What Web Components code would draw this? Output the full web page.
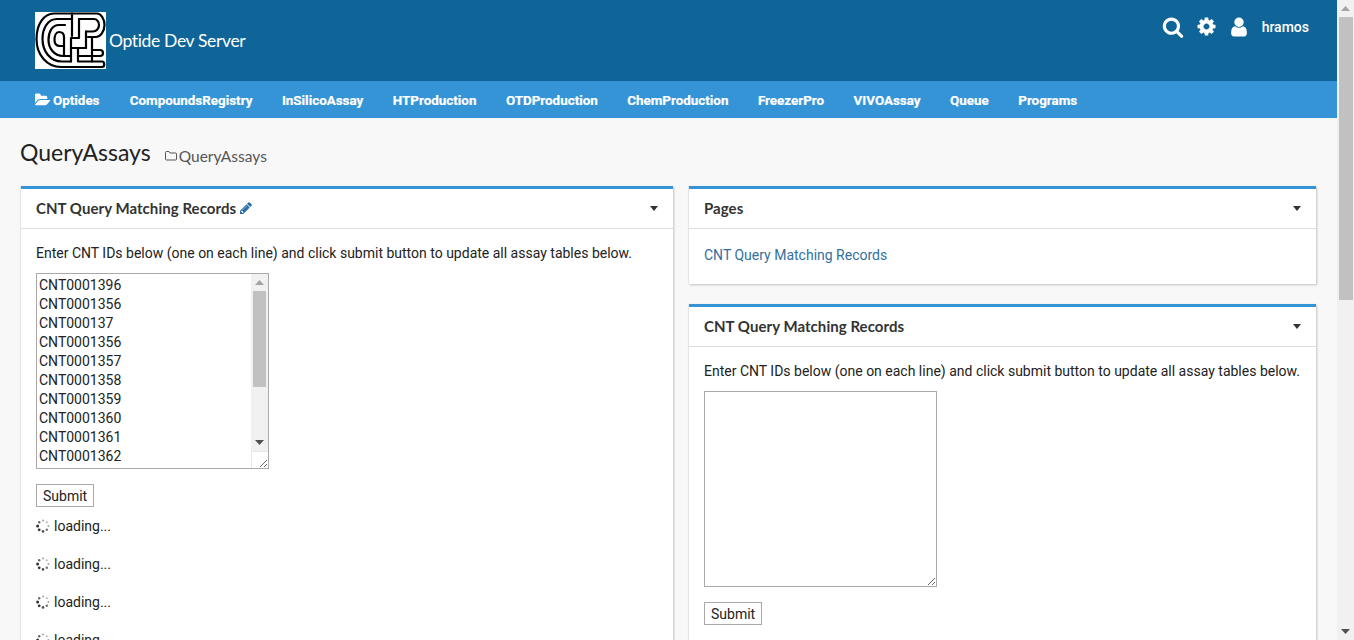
<!DOCTYPE html>
<html lang="en">
<head>
<meta charset="utf-8">
<title>QueryAssays</title>
<style>
  html, body { height: 640px; overflow: hidden; }
  body { margin: 0; display: flex; background: #f8f8f8; font-family: Roboto, "Liberation Sans", sans-serif; font-size: 14px; color: #222; }
  main { flex: 1; min-width: 0; height: 640px; overflow: hidden; }
</style>
</head>
<body>
<main>
  <optide-header></optide-header>
  <optide-nav>
    <nav-link icon="folder-open">Optides</nav-link>
    <nav-link>CompoundsRegistry</nav-link>
    <nav-link>InSilicoAssay</nav-link>
    <nav-link>HTProduction</nav-link>
    <nav-link>OTDProduction</nav-link>
    <nav-link>ChemProduction</nav-link>
    <nav-link>FreezerPro</nav-link>
    <nav-link>VIVOAssay</nav-link>
    <nav-link>Queue</nav-link>
    <nav-link>Programs</nav-link>
  </optide-nav>
  <page-title heading="QueryAssays" crumb="QueryAssays"></page-title>
  <page-columns>
    <div slot="left">
      <web-part title="CNT Query Matching Records" editable>
        <query-form scrolled ids="CNT0001396
CNT0001356
CNT000137
CNT0001356
CNT0001357
CNT0001358
CNT0001359
CNT0001360
CNT0001361
CNT0001362"></query-form>
        <loading-row></loading-row>
        <loading-row></loading-row>
        <loading-row></loading-row>
        <loading-row></loading-row>
      </web-part>
    </div>
    <div slot="right">
      <web-part title="Pages">
        <pages-list>CNT Query Matching Records</pages-list>
      </web-part>
      <web-part title="CNT Query Matching Records">
        <query-form></query-form>
      </web-part>
    </div>
  </page-columns>
</main>
<bar-scroll thumb="283" inset-right="1"></bar-scroll>

<script>
// Iconos (rutas de Font Awesome 4)
const ICONS = {
  search: ['0 0 1792 1792', 'M1216 832q0-185-131.5-316.5t-316.5-131.5-316.5 131.5-131.5 316.5 131.5 316.5 316.5 131.5 316.5-131.5 131.5-316.5zm512 832q0 52-38 90t-90 38q-54 0-90-38l-343-342q-179 124-399 124-143 0-273.5-55.5t-225-150-150-225-55.5-273.5 55.5-273.5 150-225 225-150 273.5-55.5 273.5 55.5 225 150 150 225 55.5 273.5q0 220-124 399l343 343q37 37 37 90z'],
  cog: ['0 0 1792 1792', 'M1152 896q0-106-75-181t-181-75-181 75-75 181 75 181 181 75 181-75 75-181zm512-109v222q0 12-8 23t-20 13l-185 28q-19 54-39 91 35 50 107 138 10 12 10 25t-9 23q-27 37-99 108t-94 71q-12 0-26-9l-138-108q-44 23-91 38-16 136-29 186-7 28-36 28h-222q-14 0-24.5-8.5t-11.5-21.5l-28-184q-49-16-90-37l-141 107q-10 9-25 9-14 0-25-11-126-114-165-168-7-10-7-23 0-12 8-23 15-21 51-66.5t54-70.5q-27-50-41-99l-183-27q-13-2-21-12.5t-8-23.5v-222q0-12 8-23t19-13l186-28q14-46 39-92-40-57-107-138-10-12-10-24 0-10 9-23 26-36 98.5-107.5t94.5-71.5q13 0 26 10l138 107q44-23 91-38 16-136 29-186 7-28 36-28h222q14 0 24.5 8.5t11.5 21.5l28 184q49 16 90 37l142-107q9-9 24-9 13 0 25 10 129 119 165 170 7 8 7 22 0 12-8 23-15 21-51 66.5t-54 70.5q26 50 41 98l183 28q13 2 21 12.5t8 23.5z'],
  user: ['0 0 1792 1792', 'M1536 1399q0 109-62.5 187t-150.5 78h-854q-88 0-150.5-78t-62.5-187q0-85 8.5-160.5t31.5-152 58.5-131 94-89 134.5-34.5q131 128 313 128t313-128q76 0 134.5 34.5t94 89 58.5 131 31.5 152 8.5 160.5zm-256-887q0 159-112.5 271.5t-271.5 112.5-271.5-112.5-112.5-271.5 112.5-271.5 271.5-112.5 271.5 112.5 112.5 271.5z'],
  'folder-open': ['0 0 1920 1792', 'M1815 952q0 31-31 66l-336 396q-43 51-120.5 86.5t-143.5 35.5h-1088q-34 0-60.5-13t-26.5-43q0-31 31-66l336-396q43-51 120.5-86.5t143.5-35.5h1088q34 0 60.5 13t26.5 43zm-343-344v160h-832q-94 0-197 47.5t-164 119.5l-337 396-5 6q0-4-.5-12.5t-.5-12.5v-960q0-92 66-158t158-66h320q92 0 158 66t66 158v32h544q92 0 158 66t66 158z'],
  pencil: ['0 0 1792 1792', 'M491 1536l91-91-235-235-91 91v107h128v128h107zm523-928q0-22-22-22-10 0-17 7l-542 542q-7 7-7 17 0 22 22 22 10 0 17-7l542-542q7-7 7-17zm-54-192l416 416-832 832h-416v-416zm683 96q0 53-37 90l-166 166-416-416 166-165q36-38 90-38 53 0 91 38l235 234q37 39 37 91z']
};

function iconSvg(name, size, color) {
  const [box, d] = ICONS[name];
  return `<svg viewBox="${box}" width="${size}" height="${size}" fill="${color}" aria-hidden="true"><path d="${d}"/></svg>`;
}

const HEADING_FONT = 'Lato, "Open Sans", sans-serif';

class BarScroll extends HTMLElement {
  connectedCallback() {
    if (this.shadowRoot) return;
    this.attachShadow({ mode: 'open' });
    const thumb = this.getAttribute('thumb');
    const right = this.getAttribute('inset-right') || 2;
    this.shadowRoot.innerHTML = `
      <style>
        :host { display: flex; flex-direction: column; flex: none; width: 17px; height: 100%; background: #f1f1f1; }
        .btn { flex: none; height: 17px; display: flex; align-items: center; justify-content: center; }
        .track { flex: 1; min-height: 0; }
        .thumb { height: ${thumb}px; margin: 0 ${right}px 0 2px; background: #c1c1c1; }
        svg { display: block; }
      </style>
      <div class="btn"><svg width="9" height="5"><path d="M0 5L4.5 0L9 5z" fill="#a3a3a3"/></svg></div>
      <div class="track"><div class="thumb"></div></div>
      <div class="btn"><svg width="9" height="5"><path d="M0 0L4.5 5L9 0z" fill="#505050"/></svg></div>
    `;
  }
}
customElements.define('bar-scroll', BarScroll);

// Cabecera con el logo y las acciones
class OptideHeader extends HTMLElement {
  constructor() {
    super();
    this.attachShadow({ mode: 'open' });
    this.shadowRoot.innerHTML = `
      <style>
        :host { display: flex; justify-content: space-between; align-items: flex-start; height: 81px; box-sizing: border-box; padding: 12px 28px 0 35px; background: #0f6498; color: #fff; }
        .brand { display: flex; align-items: center; gap: 3px; }
        .logo { display: block; width: 71px; height: 57px; background: #fff; }
        .name { font: 400 17.5px ${HEADING_FONT}; letter-spacing: -0.35px; }
        .actions { display: flex; align-items: center; height: 29px; }
        .actions svg { display: block; }
        .search { margin-right: 12.3px; }
        .cog { margin-right: 10.5px; }
        .user { margin-right: 12px; }
        .who { font: 500 14px Roboto, sans-serif; }
      </style>
      <div class="brand">
        <svg class="logo" viewBox="0 0 71 57" fill="none" stroke="#000" stroke-width="2.2" stroke-linecap="round" stroke-linejoin="round">
          <path d="M37 1.500H19C9 1.500 1.500 12 1.500 27C1.500 43 12 55 26 55H67C70 55 70 49.500 67 49.500H57"/>
          <path d="M36 7H22C13 7 7.500 16 7.500 27C7.500 39 15 49.500 27 49.500H36"/>
          <path d="M30 13H24C17 13 13.500 20 13.500 28C13.500 36 19 44 28 44H36"/>
          <path d="M29 44V25C29 21 27 20 24 20C21 20 19.500 24 19.500 28C19.500 32 21 34 25 34H29"/>
          <path d="M37 1.500H62C66 1.500 69.500 7 69.500 13C69.500 20 65 25 61 25H53"/>
          <path d="M37 1.500V24"/>
          <path d="M44 7H59C62 7 64 10 64 13C64 17 61 19.500 58 19.500H51"/>
          <path d="M44 7V26H36V49.500"/>
          <path d="M51 19.500V36H43V49.500H57V38"/>
          <path d="M36 36H51"/>
          <path d="M43 44H57"/>
          <path d="M57 25V38H65C69 38 69 44 65 44H57"/>
        </svg>
        <span class="name">Optide Dev Server</span>
      </div>
      <div class="actions">
        <span class="search">${iconSvg('search', 22, '#fff')}</span>
        <span class="cog">${iconSvg('cog', 21, '#fff')}</span>
        <span class="user">${iconSvg('user', 22, '#fff')}</span>
        <span class="who">hramos</span>
      </div>
    `;
  }
}
customElements.define('optide-header', OptideHeader);

// Barra de navegacion
class OptideNav extends HTMLElement {
  constructor() {
    super();
    this.attachShadow({ mode: 'open' });
    this.shadowRoot.innerHTML = `
      <style>
        :host { display: flex; align-items: center; gap: 29.5px; height: 37px; box-sizing: border-box; padding: 1px 0 0 35px; background: #3494d6; }
        ::slotted(:first-child) { margin-right: 0.8px; }
      </style>
      <slot></slot>
    `;
  }
}
customElements.define('optide-nav', OptideNav);

class NavLink extends HTMLElement {
  connectedCallback() {
    if (this.shadowRoot) return;
    this.attachShadow({ mode: 'open' });
    const icon = this.getAttribute('icon');
    this.shadowRoot.innerHTML = `
      <style>
        :host { display: flex; align-items: center; gap: 2px; color: #fff; font: 700 13.4px Roboto, sans-serif; -webkit-text-stroke: 0.2px #fff; }
        svg { display: block; }
      </style>
      ${icon ? iconSvg(icon, 16, '#fff') : ''}<slot></slot>
    `;
  }
}
customElements.define('nav-link', NavLink);

// Titulo de la pagina
class PageTitle extends HTMLElement {
  connectedCallback() {
    if (this.shadowRoot) return;
    this.attachShadow({ mode: 'open' });
    this.shadowRoot.innerHTML = `
      <style>
        :host { display: flex; align-items: baseline; height: 68px; box-sizing: border-box; padding: 20px 0 0 20px; }
        h1 { margin: 0; font: 400 23px ${HEADING_FONT}; color: #222; }
        .crumb { display: flex; align-items: center; gap: 2px; margin-left: 14px; font: 400 15.5px ${HEADING_FONT}; color: #555; }
        svg { display: block; }
      </style>
      <h1>${this.getAttribute('heading')}</h1>
      <span class="crumb">
        <svg width="12" height="11" viewBox="0 0 12 11" fill="none" stroke="#555"><path d="M.5 9V2.500q0-1 1-1h2.500l1 1.500h5.500q1 0 1 1V9q0 1-1 1h-9q-1 0-1-1z"/></svg>
        ${this.getAttribute('crumb')}
      </span>
    `;
  }
}
customElements.define('page-title', PageTitle);

// Dos columnas del contenido
class PageColumns extends HTMLElement {
  constructor() {
    super();
    this.attachShadow({ mode: 'open' });
    this.shadowRoot.innerHTML = `
      <style>
        :host { display: grid; grid-template-columns: 651.5px 627px; gap: 16.5px; padding-left: 21px; }
      </style>
      <slot name="left"></slot>
      <slot name="right"></slot>
    `;
  }
}
customElements.define('page-columns', PageColumns);

// Panel con titulo y flecha
class WebPart extends HTMLElement {
  connectedCallback() {
    if (this.shadowRoot) return;
    this.attachShadow({ mode: 'open' });
    const edit = this.hasAttribute('editable') ? iconSvg('pencil', 14, '#2a6ea3') : '';
    this.shadowRoot.innerHTML = `
      <style>
        :host { display: block; margin-bottom: 20px; background: #fff; border-top: 3px solid #3494d6; box-shadow: 1px 1px 2px rgba(0,0,0,.22), -1px 0 1px rgba(0,0,0,.06); }
        header { display: flex; align-items: center; height: 39px; padding: 0 15px; border-bottom: 1px solid #ddd; }
        h3 { margin: 0 0 2px; font: 700 15px ${HEADING_FONT}; letter-spacing: .05px; color: #333; display: flex; align-items: center; gap: 3px; }
        .caret { margin: 0 0 1px auto; width: 0; height: 0; border: 4.5px solid transparent; border-top: 5px solid #333; border-bottom: 0; }
        svg { display: block; }
      </style>
      <header><h3>${this.getAttribute('title')}${edit}</h3><span class="caret"></span></header>
      <slot></slot>
    `;
  }
}
customElements.define('web-part', WebPart);

// Formulario de consulta por IDs
class QueryForm extends HTMLElement {
  connectedCallback() {
    if (this.shadowRoot) return;
    this.attachShadow({ mode: 'open' });
    const scrolled = this.hasAttribute('scrolled');
    this.shadowRoot.innerHTML = `
      <style>
        :host { display: block; padding: 16px 15px 16px; }
        :host([scrolled]) { padding-bottom: 0; }
        p { margin: 0 0 11px; line-height: 17px; color: #222; }
        .box { position: relative; width: 233px; margin: 0 0 15px; }
        textarea { display: block; width: 233px; height: 196px; box-sizing: border-box; padding: 2px; border: 1px solid #a9a9a9; border-radius: 0; outline: 0; resize: both; font: 14px/19px Roboto, sans-serif; color: #222; background: #fff; overflow: hidden; white-space: pre; }
        bar-scroll { position: absolute; top: 1px; right: 1px; height: 177px; }
        .corner { position: absolute; right: 1px; bottom: 1px; width: 16px; height: 16px; border: solid #e6e6e6; border-width: 1px 0 0 1px; pointer-events: none; }
        button { display: block; height: 23px; padding: 0 6px; border: 1px solid #a9a9a9; background: #fff; font: 14px Roboto, sans-serif; color: #222; }
      </style>
      <p>Enter CNT IDs below (one on each line) and click submit button to update all assay tables below.</p>
      <div class="box">
        <textarea></textarea>
        ${scrolled ? '<bar-scroll thumb="96"></bar-scroll><span class="corner"></span>' : ''}
      </div>
      <button type="button">Submit</button>
    `;
    this.shadowRoot.querySelector('textarea').value = this.getAttribute('ids') || '';
  }
}
customElements.define('query-form', QueryForm);

// Fila de "loading..." con el spinner
class LoadingRow extends HTMLElement {
  constructor() {
    super();
    this.attachShadow({ mode: 'open' });
    const dots = [[7, 1.6, .45, 1], [10.8, 3.2, .35, 1], [12.4, 7, .45, 1], [10.8, 10.8, .7, 1.2], [7, 12.4, .85, 1.3], [3.2, 10.8, 1, 1.4], [1.6, 7, 1, 1.5], [3.2, 3.2, .75, 1.2]]
      .map(([x, y, o, r]) => `<circle cx="${x}" cy="${y}" r="${r}" opacity="${o}"/>`).join('');
    this.shadowRoot.innerHTML = `
      <style>
        :host { display: flex; align-items: center; gap: 4px; height: 38px; padding-left: 15px; color: #222; }
        svg { display: block; }
      </style>
      <svg width="14" height="14" viewBox="0 0 14 14" fill="#333">${dots}</svg>
      <span>loading...</span>
    `;
  }
}
customElements.define('loading-row', LoadingRow);

// Lista de paginas
class PagesList extends HTMLElement {
  constructor() {
    super();
    this.attachShadow({ mode: 'open' });
    this.shadowRoot.innerHTML = `
      <style>
        :host { display: block; padding: 18px 15px 20px; line-height: 17px; color: #336f9f; }
      </style>
      <slot></slot>
    `;
  }
}
customElements.define('pages-list', PagesList);
</script>
</body>
</html>
